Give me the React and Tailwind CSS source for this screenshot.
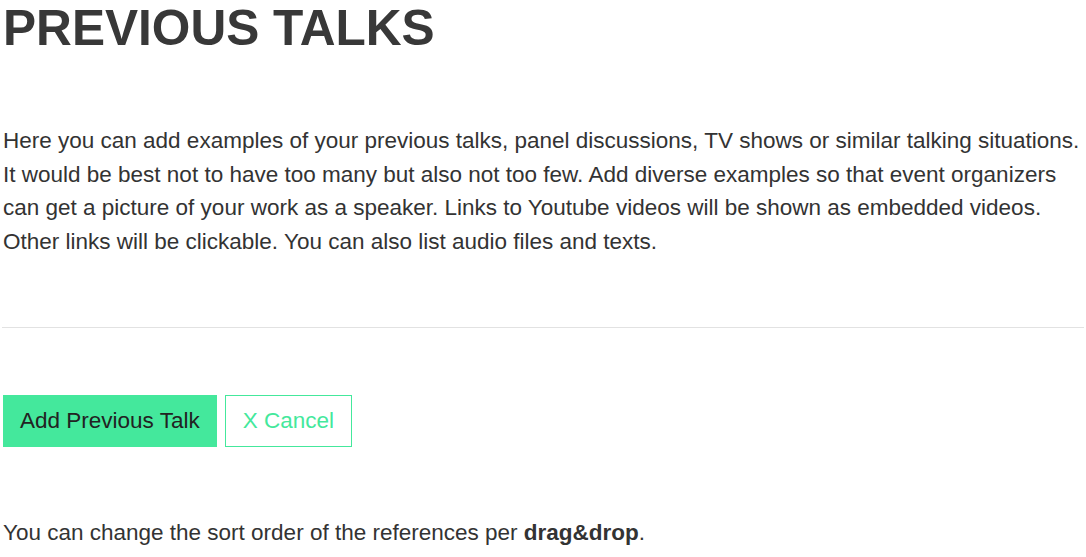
import React from 'react'

export default function App() {
  return (
    <div className="px-[3px] text-[#333333]" style={{ fontFamily: '"Liberation Sans", Arial, sans-serif' }}>
      <h1 className="m-0 text-[49.6px] font-bold leading-[56px] text-[#383838]">PREVIOUS TALKS</h1>

      <p className="mt-[68px] text-[22.5px] leading-[33.7px]">
        Here you can add examples of your previous talks, panel discussions, TV shows or similar talking situations.
        It would be best not to have too many but also not too few. Add diverse examples so that event organizers
        can get a picture of your work as a speaker. Links to Youtube videos will be shown as embedded videos.
        Other links will be clickable. You can also list audio files and texts.
      </p>

      <hr className="mt-[68px] -mx-px border-t border-[#e2e2e2]" />

      <div className="mt-[67px] flex gap-[8px]">
        <button className="h-[52px] px-[16px] bg-[#44e89c] text-[22.5px] text-[#222] border border-[#44e89c]">
          Add Previous Talk
        </button>
        <button className="h-[52px] px-[17px] bg-white text-[22.5px] text-[#44e89c] border border-[#44e89c]">
          X Cancel
        </button>
      </div>

      <p className="mt-[69px] text-[22.5px] leading-[33.7px]">
        You can change the sort order of the references per <b>drag&amp;drop</b>.
      </p>
    </div>
  )
}
